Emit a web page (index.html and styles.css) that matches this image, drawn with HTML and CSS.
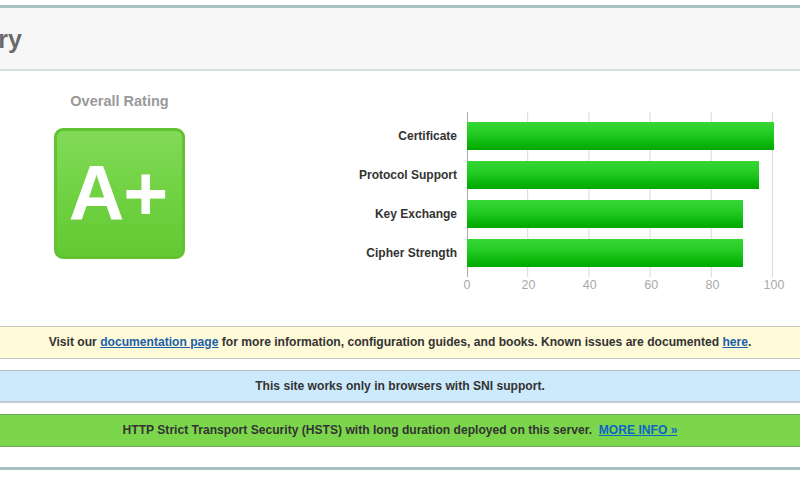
FILE: index.html
```html
<!DOCTYPE html>
<html lang="en">
<head>
<meta charset="utf-8">
<title>Summary</title>
<link rel="stylesheet" href="styles.css">
</head>
<body>
<div class="section">
  <div class="section-title"><h2 class="title-text">Summary</h2></div>
  <div class="section-body">
    <div class="rating-row">
      <div class="rating-col">
        <div class="rating-label">Overall Rating</div>
        <div class="grade">A+</div>
      </div>
      <div class="chart">
        <div class="labels">
          <div class="label">Certificate</div>
          <div class="label">Protocol Support</div>
          <div class="label">Key Exchange</div>
          <div class="label">Cipher Strength</div>
        </div>
        <div class="plot">
          <div class="bar" style="width:100%"></div>
          <div class="bar" style="width:95%"></div>
          <div class="bar" style="width:90%"></div>
          <div class="bar" style="width:90%"></div>
        </div>
        <div></div>
        <div class="ticks">
          <span class="tick">0</span>
          <span class="tick">20</span>
          <span class="tick">40</span>
          <span class="tick">60</span>
          <span class="tick">80</span>
          <span class="tick">100</span>
        </div>
      </div>
    </div>
    <div class="notice notice-yellow">Visit our <a href="#">documentation page</a> for more information, configuration guides, and books. Known issues are documented <a href="#">here</a>.</div>
    <div class="notice notice-blue">This site works only in browsers with SNI support.</div>
    <div class="notice notice-green">HTTP Strict Transport Security (HSTS) with long duration deployed on this server.&nbsp; <a href="#">MORE INFO »</a></div>
  </div>
</div>
</body>
</html>
```
FILE: styles.css
```css
html, body {
  margin: 0;
  padding: 0;
  background: #ffffff;
}
body {
  font-family: "Liberation Sans", Arial, sans-serif;
  color: #333;
  overflow: hidden;
}
.section {
  margin-top: 5px;
  border-top: 3px solid #a9c0c1;
  border-bottom: 3px solid #a9c0c1;
}
.section-title {
  background: #f7f7f7;
  border-bottom: 2px solid #d6e2e2;
  padding: 16px 0 15px 0;
  overflow: hidden;
}
.title-text {
  margin: 0 0 0 -92px;
  font-size: 25px;
  line-height: 30px;
  font-weight: bold;
  color: #6a6a6a;
  white-space: nowrap;
}
.section-body {
  padding-bottom: 20px;
}
.rating-row {
  display: flex;
  padding-top: 22px;
  height: 233px;
}
.rating-col {
  width: 239px;
  display: flex;
  flex-direction: column;
  align-items: center;
}
.rating-label {
  font-size: 14.5px;
  line-height: 17px;
  font-weight: bold;
  color: #999;
}
.grade {
  margin-top: 18px;
  width: 125px;
  height: 125px;
  border: 3px solid #62c232;
  border-radius: 9px;
  background: linear-gradient(to bottom, #82da58 0%, #6fd141 55%, #63c933 100%);
  color: #fff;
  font-size: 77px;
  font-weight: bold;
  line-height: 125px;
  text-align: center;
  letter-spacing: -1px;
  text-indent: -3px;
}
.chart {
  margin-left: 18px;
  display: grid;
  grid-template-columns: 200px 307px;
  column-gap: 10px;
  align-content: start;
  margin-top: 19px;
}
.labels {
  display: flex;
  flex-direction: column;
  gap: 11px;
  padding: 10px 0;
}
.label {
  height: 28px;
  line-height: 28px;
  text-align: right;
  font-size: 12px;
  font-weight: bold;
  color: #333;
  white-space: nowrap;
}
.plot {
  height: 165px;
  box-sizing: border-box;
  padding: 10px 0;
  display: flex;
  flex-direction: column;
  gap: 11px;
  background:
    linear-gradient(to right, #aaa 1px, transparent 1px) 0 0 / 1px 100% no-repeat,
    linear-gradient(to right, transparent 60px, #d9d9d9 60px, #d9d9d9 62px, transparent 62px) 0 0 / 61.2px 100% repeat-x;
}
.bar {
  height: 28px;
  background: linear-gradient(to bottom, #36d636 0%, #25cc25 40%, #0cb80c 75%, #00a800 100%);
}
.ticks {
  display: flex;
  justify-content: space-between;
  width: 307px;
  margin-top: 1px;
}
.tick {
  width: 0;
  display: flex;
  justify-content: center;
  white-space: nowrap;
  font-size: 12.5px;
  line-height: 14px;
  color: #aaa;
}
.notice {
  box-sizing: border-box;
  height: 33px;
  line-height: 31px;
  text-align: center;
  font-size: 12.1px;
  font-weight: bold;
  color: #333;
  white-space: nowrap;
  border-top: 1px solid #c2c2bc;
  border-bottom: 1px solid #c2c2bc;
  margin-bottom: 11px;
}
.notice a {
  color: #1c5fab;
  text-decoration: underline;
}
.notice-yellow {
  background: #fffad8;
  border-color: #c9c9bf;
}
.notice-blue {
  background: #cdeafd;
  border-top-color: #b3bcc2;
  border-bottom: 2px solid #c3cacf;
}
.notice-green {
  background: #7cd64b;
  border-color: #6ea85c;
  margin-bottom: 0;
}
.notice-green a {
  color: #0d65c8;
}
```
